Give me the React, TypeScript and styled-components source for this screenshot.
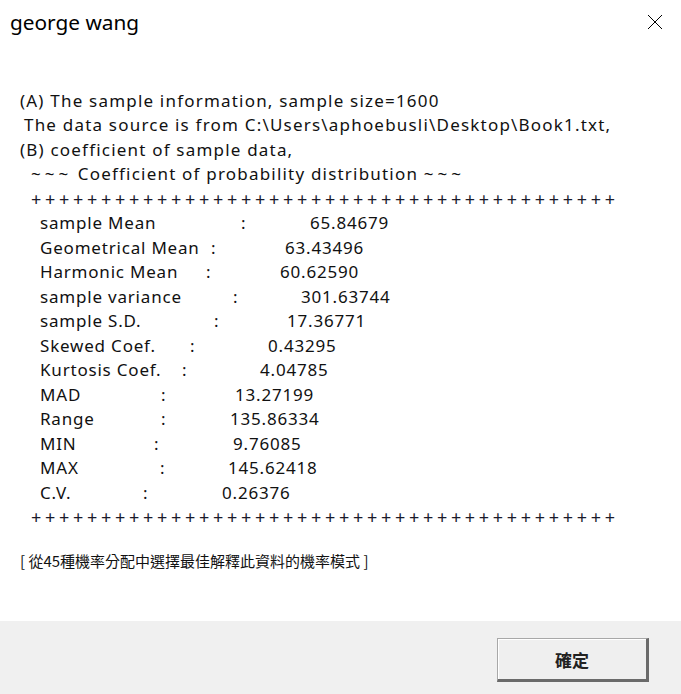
import React from "react";
import styled, { createGlobalStyle } from "styled-components";

const Global = createGlobalStyle`
  html, body { margin: 0; padding: 0; background: #ffffff; }
  #root { width: 681px; height: 694px; }
`;

const Dialog = styled.div`
  width: 681px;
  height: 694px;
  display: flex;
  flex-direction: column;
  background: #ffffff;
  font-family: "Noto Sans", "Noto Sans CJK TC", sans-serif;
  color: #111;
`;

const TitleBar = styled.div`
  height: 44px;
  display: flex;
  align-items: center;
  justify-content: space-between;
  padding: 0 18px 0 10px;
  flex: none;
`;

const Title = styled.div`
  font-family: "Noto Sans", sans-serif;
  font-size: 20.8px;
  color: #000;
  line-height: 24px;
`;

const CloseButton = styled.div`
  width: 16px;
  height: 16px;
  display: flex;
  align-items: center;
  justify-content: center;
`;

const Body = styled.div`
  flex: 1;
  padding: 45px 0 0 20px;
  font-size: 17px;
  line-height: 24.47px;
`;

const Line = styled.div<{ $indent?: number }>`
  white-space: pre;
  padding-left: ${(p) => p.$indent ?? 0}px;
  height: 24.47px;
  letter-spacing: 1.2px;
`;

const Tildes = styled.span`
  letter-spacing: 4px;
`;

const PlusLine = styled.div`
  white-space: pre;
  padding-left: 11px;
  letter-spacing: 3.7px;
  font-size: 18px;
  height: 24.47px;
  color: #1a1a2a;
`;

const StatRow = styled.div`
  display: flex;
  padding-left: 20px;
  height: 24.47px;
  white-space: pre;
  letter-spacing: 0.8px;
`;

const StatName = styled.span<{ $w: number }>`
  display: inline-block;
  width: ${(p) => p.$w}px;
  flex: none;
`;

const StatValue = styled.span``;

const Note = styled.div`
  margin-top: 22px;
  font-family: "Noto Sans CJK TC", sans-serif;
  font-size: 15px;
  line-height: 20px;
  color: #111;
`;

const Footer = styled.div`
  height: 73px;
  flex: none;
  background: #f0f0f0;
  display: flex;
  justify-content: flex-end;
  align-items: flex-start;
  padding: 17px 32px 0 0;
  box-sizing: border-box;
`;

const OkButton = styled.button`
  width: 152px;
  height: 44px;
  box-sizing: border-box;
  background: #efefef;
  border-style: solid;
  border-color: #a8a8a8 #6a6a6a #6a6a6a #a8a8a8;
  border-width: 1px 3px 3px 1px;
  box-shadow: inset 1px 1px 0 #ffffff;
  font-family: "Noto Sans CJK TC", sans-serif;
  font-size: 17px;
  font-weight: 700;
  color: #222;
  padding: 0;
`;

const stats = [
  { name: "sample Mean", colon: 243, value: "65.84679", vx: 310 },
  { name: "Geometrical Mean", colon: 213, value: "63.43496", vx: 285 },
  { name: "Harmonic Mean", colon: 208, value: "60.62590", vx: 280 },
  { name: "sample variance", colon: 235, value: "301.63744", vx: 301 },
  { name: "sample S.D.", colon: 216, value: "17.36771", vx: 287 },
  { name: "Skewed Coef.", colon: 192, value: "0.43295", vx: 268 },
  { name: "Kurtosis Coef.", colon: 184, value: "4.04785", vx: 260 },
  { name: "MAD", colon: 163, value: "13.27199", vx: 235 },
  { name: "Range", colon: 163, value: "135.86334", vx: 230 },
  { name: "MIN", colon: 156, value: "9.76085", vx: 233 },
  { name: "MAX", colon: 162, value: "145.62418", vx: 228 },
  { name: "C.V.", colon: 145, value: "0.26376", vx: 222 },
];

const plus = "+".repeat(42);

export default function App() {
  return (
    <>
      <Global />
      <Dialog>
        <TitleBar>
          <Title>george wang</Title>
          <CloseButton>
            <svg width="16" height="16" viewBox="0 0 16 16">
              <path d="M1 1 L15 15 M15 1 L1 15" stroke="#000" strokeWidth="1" fill="none" />
            </svg>
          </CloseButton>
        </TitleBar>
        <Body>
          <Line>(A) The sample information, sample size=1600</Line>
          <Line $indent={4}>The data source is from C:\Users\aphoebusli\Desktop\Book1.txt,</Line>
          <Line>(B) coefficient of sample data,</Line>
          <Line $indent={11}>
            <Tildes>~~~</Tildes> Coefficient of probability distribution <Tildes>~~~</Tildes>
          </Line>
          <PlusLine>{plus}</PlusLine>
          {stats.map((s) => (
            <StatRow key={s.name}>
              <StatName $w={s.colon - 2 - 40}>{s.name}</StatName>
              <StatName $w={s.vx - s.colon + 2}>:</StatName>
              <StatValue>{s.value}</StatValue>
            </StatRow>
          ))}
          <PlusLine>{plus}</PlusLine>
          <Note>[ 從45種機率分配中選擇最佳解釋此資料的機率模式 ]</Note>
        </Body>
        <Footer>
          <OkButton>確定</OkButton>
        </Footer>
      </Dialog>
    </>
  );
}
